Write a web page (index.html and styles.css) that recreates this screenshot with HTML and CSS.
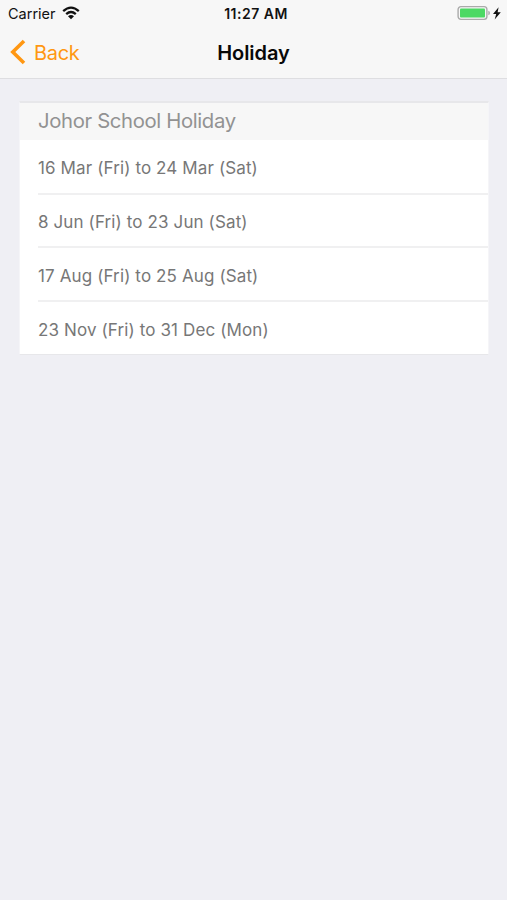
FILE: index.html
```html
<!DOCTYPE html>
<html lang="en">
<head>
<meta charset="utf-8">
<title>Holiday</title>
<link rel="stylesheet" href="styles.css">
</head>
<body>
<header class="top">
  <div class="status">
    <div class="carrier"><span class="carrier-name">Carrier</span>
      <svg class="wifi" width="18" height="14" viewBox="0 0 18 14" fill="none" stroke="#111" stroke-width="2.3"><path d="M1.2 5.1Q9-1.9 16.8 5.1M4.2 8.2Q9 3.9 13.8 8.2"/><path d="M9 13.2 6 10.2Q9 7.8 12 10.2Z" fill="#111" stroke="none"/></svg>
    </div>
    <span class="time">11:27 AM</span>
    <div class="power">
      <svg width="46" height="16" viewBox="0 0 46 16"><rect x="1.1" y="1.6" width="28.8" height="12.8" rx="2.8" fill="#f7f7f7" stroke="#aaa" stroke-width="1.4"/><rect x="3" y="3.5" width="25" height="9" rx="1" fill="#4cd964"/><path d="M31.3 5.8Q33 6.3 33 8T31.3 10.2Z" fill="#aaa"/><path d="M41.6 2.3 36 9H39.2L37.7 14.4 43.8 7.3H40.6Z" fill="#111"/></svg>
    </div>
  </div>
  <nav class="nav">
    <a class="back"><svg width="16" height="26" viewBox="0 0 16 26" fill="none" stroke="#ff9712" stroke-width="3.6"><path d="M14 2 2.8 13 14 24"/></svg><span class="back-label">Back</span></a>
    <h1 class="title">Holiday</h1>
  </nav>
</header>
<main class="card">
  <h2 class="card-head"><span>Johor School Holiday</span></h2>
  <ul class="list">
    <li class="row"><span>16 Mar (Fri) to 24 Mar (Sat)</span></li>
    <li class="row"><span>8 Jun (Fri) to 23 Jun (Sat)</span></li>
    <li class="row"><span>17 Aug (Fri) to 25 Aug (Sat)</span></li>
    <li class="row"><span>23 Nov (Fri) to 31 Dec (Mon)</span></li>
  </ul>
</main>
</body>
</html>
```
FILE: styles.css
```css
* { box-sizing: border-box; }
body { margin: 0; min-height: 900px; background: #efeff4; font-family: Inter, "Liberation Sans", sans-serif; color: #111; }
.top { height: 79px; background: #f7f7f7; border-bottom: 1px solid #dedee1; }
.status { height: 27px; display: grid; grid-template-columns: 1fr auto 1fr; align-items: center; padding: 0 4px 0 8px; }
.carrier { display: flex; align-items: center; gap: 6px; font-size: 14.5px; }
.wifi { display: block; margin-top: -1px; }
.power { display: flex; justify-content: flex-end; margin-top: -1px; }
.time { font-size: 14px; font-weight: 600; letter-spacing: .5px; margin-right: -1px; }
.nav { height: 51px; display: grid; grid-template-columns: 1fr auto 1fr; align-items: center; padding: 0 10px; }
.back { display: flex; align-items: center; gap: 8px; color: #ff9712; font-size: 20px; letter-spacing: -.3px; }
.back svg { margin-top: -1px; }
.title { margin: 0; font-size: 20px; font-weight: 600; line-height: 24px; color: #080808; letter-spacing: -.05px; }
.card { margin: 22px 18px 0 19px; height: 254px; background: #fff; border: 1px solid #e7e7ea; border-width: 2px 1px 1px; border-left-color: #f5f5f8; border-right-color: #f5f5f8; }
.card-head { margin: 0; height: 37px; padding-left: 18px; background: #f7f7f7; color: #929292; font-size: 20.3px; font-weight: 400; line-height: 36px; letter-spacing: -.35px; }
.list { margin: 0; padding: 1px 0 0 18px; list-style: none; }
.row { height: 53.67px; padding-top: 3px; display: flex; align-items: center; color: #777; font-size: 17px; letter-spacing: .12px; border-bottom: 2px solid #f0f0f1; }
.row:last-child { height: 53px; border-bottom: 0; }
```
